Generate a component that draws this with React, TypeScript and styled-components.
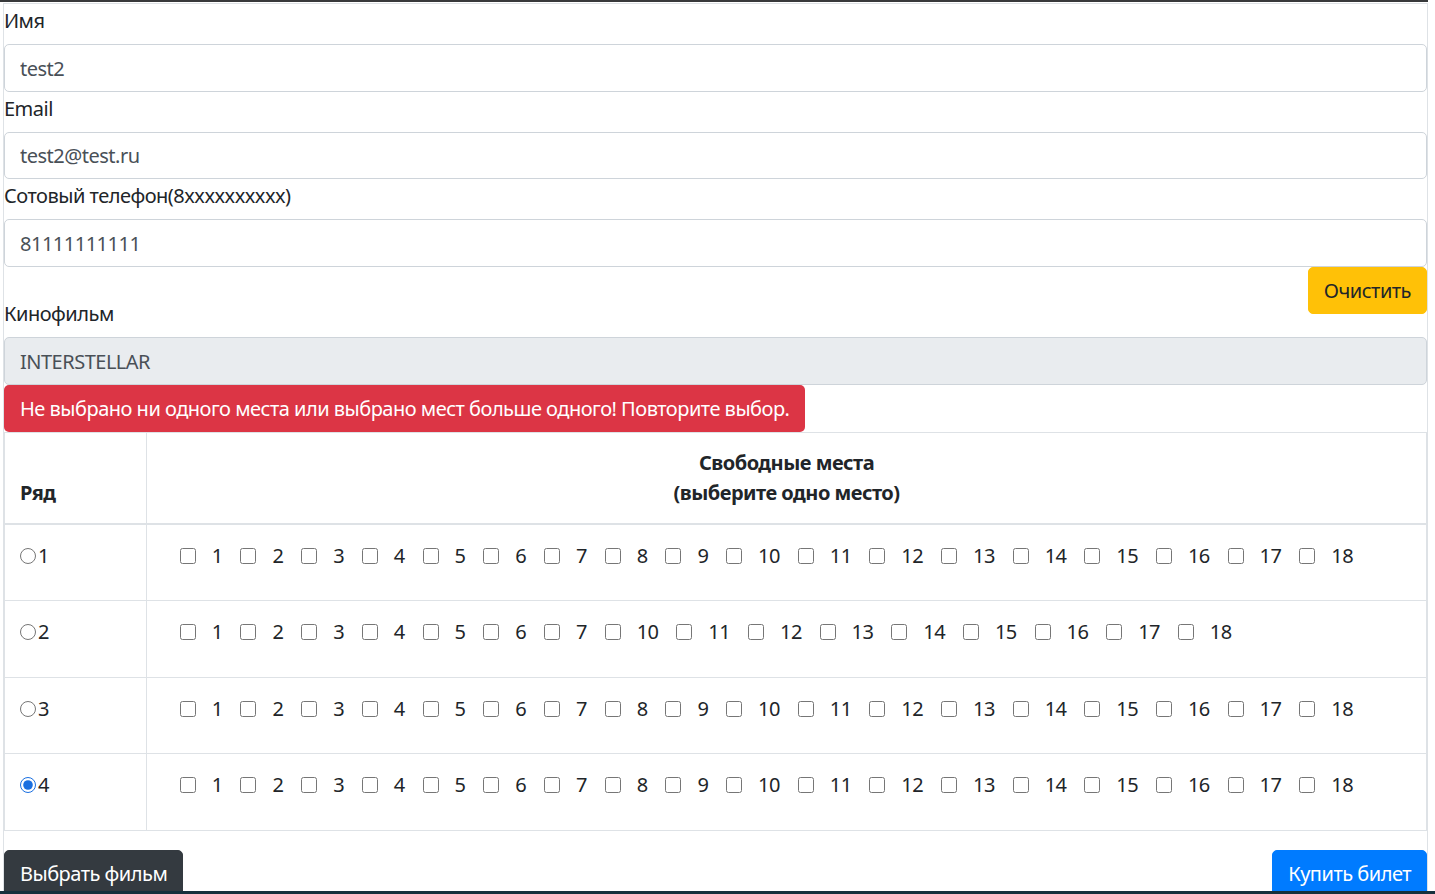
import React from "react";
import styled, { createGlobalStyle } from "styled-components";

const Global = createGlobalStyle`
  html, body {
    margin: 0;
    padding: 0;
    background: #ffffff;
    overflow: hidden;
    height: 894px;
  }
  body {
    font-family: "Noto Sans", "Open Sans", sans-serif;
    font-size: 20px;
    line-height: 30px;
    letter-spacing: -0.5px;
    color: #212529;
  }
  * { box-sizing: border-box; }
`;

const TopLine = styled.div`
  height: 2px;
  width: 1428px;
  background: #38393b;
  margin-bottom: 1px;
`;

const Container = styled.div`
  margin-left: 3px;
  width: 1425px;
  border: 1px solid #dee2e6;
  border-bottom: none;
  height: 891px;
`;

const Label = styled.label`
  display: block;
  height: 40px;
  padding-bottom: 10px;
  line-height: 30px;
  padding-top: 2px;
`;

const Input = styled.input<{ $disabled?: boolean }>`
  display: block;
  width: 100%;
  height: 47.5px;
  padding: 8px 15px 7px;
  font-family: inherit;
  font-size: 20px;
  line-height: 30px;
  letter-spacing: -0.5px;
  color: #495057;
  background: ${(p) => (p.$disabled ? "#e9ecef" : "#ffffff")};
  border: 1px solid #ced4da;
  border-radius: 5px;
  outline: none;
`;

const ButtonRow = styled.div`
  height: 30.5px;
  display: flex;
  justify-content: flex-end;
  align-items: flex-start;
`;

const Button = styled.button<{ $bg: string; $fg: string }>`
  height: 47px;
  padding: 8px 15px 7px;
  font-family: inherit;
  font-size: 20px;
  line-height: 30px;
  letter-spacing: -0.5px;
  background: ${(p) => p.$bg};
  color: ${(p) => p.$fg};
  border: 1px solid ${(p) => p.$bg};
  border-radius: 5px;
  cursor: pointer;
  white-space: nowrap;
  position: relative;
  z-index: 1;
`;

const Alert = styled.div`
  display: inline-block;
  height: 47px;
  padding: 9px 16px 8px;
  background: #dc3545;
  color: #ffffff;
  border-radius: 5px;
  line-height: 30px;
  white-space: nowrap;
`;

const AlertRow = styled.div`
  height: 47px;
`;

const Table = styled.table`
  width: 100%;
  border-collapse: collapse;
  border-left: 1px solid #dee2e6;
  border-right: 1px solid #dee2e6;
`;

const Th = styled.th<{ $center?: boolean }>`
  height: 92px;
  padding: 15px;
  vertical-align: bottom;
  text-align: ${(p) => (p.$center ? "center" : "left")};
  font-weight: 700;
  border: 1px solid #dee2e6;
  border-bottom: 2px solid #dee2e6;
`;

const RowCell = styled.td<{ $first?: boolean }>`
  height: 76.5px;
  padding: 16px 15px 0 15px;
  vertical-align: top;
  border: 1px solid #dee2e6;
  width: ${(p) => (p.$first ? "142px" : "auto")};
`;

const RowChoice = styled.label`
  display: inline-flex;
  align-items: center;
  height: 30px;
`;

const Radio = styled.input`
  width: 16px;
  height: 16px;
  margin: 0 2px 0 0;
  accent-color: #1a6fe0;
`;

const Seats = styled.div`
  display: flex;
  align-items: center;
  height: 30px;
  white-space: nowrap;
`;

const Seat = styled.label`
  display: inline-flex;
  align-items: center;
  margin-left: 17.75px;
`;

const SeatBox = styled.input`
  width: 16px;
  height: 16px;
  margin: 0 16px 0 0;
`;

const Footer = styled.div`
  margin-top: 19px;
  display: flex;
  justify-content: space-between;
`;

const Taskbar = styled.div`
  position: fixed;
  left: 0;
  right: 0;
  bottom: 0;
  height: 3px;
  background: #16313d;
  z-index: 5;
`;

const allSeats = Array.from({ length: 18 }, (_, i) => i + 1);
const rows: { n: number; seats: number[]; checked?: boolean }[] = [
  { n: 1, seats: allSeats },
  { n: 2, seats: allSeats.filter((s) => s !== 8 && s !== 9) },
  { n: 3, seats: allSeats },
  { n: 4, seats: allSeats, checked: true },
];

export default function App() {
  return (
    <>
      <Global />
      <TopLine />
      <Container>
        <Label>Имя</Label>
        <Input defaultValue="test2" />
        <Label>Email</Label>
        <Input defaultValue="test2@test.ru" />
        <Label>Сотовый телефон(8xxxxxxxxxx)</Label>
        <Input defaultValue="81111111111" />
        <ButtonRow>
          <Button $bg="#ffc107" $fg="#212529">Очистить</Button>
        </ButtonRow>
        <Label>Кинофильм</Label>
        <Input $disabled readOnly value="INTERSTELLAR" />
        <AlertRow>
          <Alert>Не выбрано ни одного места или выбрано мест больше одного! Повторите выбор.</Alert>
        </AlertRow>
        <Table>
          <thead>
            <tr>
              <Th>Ряд</Th>
              <Th $center>
                Свободные места
                <br />
                (выберите одно место)
              </Th>
            </tr>
          </thead>
          <tbody>
            {rows.map((r) => (
              <tr key={r.n}>
                <RowCell $first>
                  <RowChoice>
                    <Radio type="radio" name="row" defaultChecked={r.checked} />
                    {r.n}
                  </RowChoice>
                </RowCell>
                <RowCell>
                  <Seats>
                    {r.seats.map((s) => (
                      <Seat key={s}>
                        <SeatBox type="checkbox" />
                        {s}
                      </Seat>
                    ))}
                  </Seats>
                </RowCell>
              </tr>
            ))}
          </tbody>
        </Table>
        <Footer>
          <Button $bg="#343a40" $fg="#ffffff">Выбрать фильм</Button>
          <Button $bg="#007bff" $fg="#ffffff">Купить билет</Button>
        </Footer>
      </Container>
      <Taskbar />
    </>
  );
}
